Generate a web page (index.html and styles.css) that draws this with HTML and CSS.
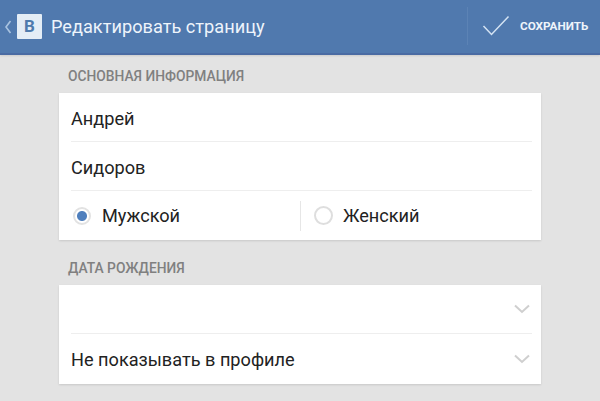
FILE: index.html
```html
<!DOCTYPE html>
<html lang="ru">
<head>
<meta charset="utf-8">
<title>Редактировать страницу</title>
<link rel="stylesheet" href="styles.css">
</head>
<body>
<header class="topbar">
  <div class="brand">
    <svg class="back" width="8" height="16" viewBox="0 0 8 16"><path d="M6.5 2 L2 8 L6.5 14" fill="none" stroke="#a9c3e0" stroke-width="1.6"/></svg>
    <span class="logo">В</span>
    <span class="title">Редактировать страницу</span>
  </div>
  <div class="save">
    <svg class="check" width="28" height="22" viewBox="0 0 28 22"><path d="M1.5 11 L9.5 19.5 L26.5 1.5" fill="none" stroke="#d4e3f3" stroke-width="1.5"/></svg>
    <span class="save-label">СОХРАНИТЬ</span>
  </div>
</header>
<main class="content">
  <h2 class="section-title">ОСНОВНАЯ ИНФОРМАЦИЯ</h2>
  <section class="card">
    <div class="row">Андрей</div>
    <div class="row">Сидоров</div>
    <div class="row gender">
      <div class="option">
        <span class="radio on"></span>
        <span>Мужской</span>
      </div>
      <div class="option second">
        <span class="radio"></span>
        <span>Женский</span>
      </div>
    </div>
  </section>
  <h2 class="section-title lower">ДАТА РОЖДЕНИЯ</h2>
  <section class="card">
    <div class="row select">
      <span></span>
      <svg class="chev" width="16" height="10" viewBox="0 0 16 10"><path d="M1 1.5 L8 8 L15 1.5" fill="none" stroke="#cfcfcf" stroke-width="2"/></svg>
    </div>
    <div class="row select">
      <span>Не показывать в профиле</span>
      <svg class="chev" width="16" height="10" viewBox="0 0 16 10"><path d="M1 1.5 L8 8 L15 1.5" fill="none" stroke="#cfcfcf" stroke-width="2"/></svg>
    </div>
  </section>
</main>
</body>
</html>
```
FILE: styles.css
```css
* { box-sizing: border-box; }
html, body { margin: 0; padding: 0; }
body {
  width: 600px;
  height: 401px;
  overflow: hidden;
  background: #e3e3e3;
  font-family: Roboto, "Liberation Sans", sans-serif;
  color: #222;
}
.topbar {
  height: 55px;
  background: #5079ae;
  border-bottom: 2px solid #4a6ba3;
  box-shadow: 0 1px 2px rgba(0,0,0,.1);
  display: flex;
  justify-content: space-between;
  align-items: center;
}
.brand { display: flex; align-items: center; padding-left: 4px; }
.back { display: block; }
.logo {
  width: 25px;
  height: 25px;
  margin-left: 5px;
  background: #e4edf6;
  color: #4f7bad;
  font-weight: 700;
  font-size: 17px;
  line-height: 25px;
  text-align: center;
  border-radius: 1px;
}
.title { margin-left: 9px; font-size: 18.2px; color: #eef4fb; }
.save {
  width: 133px;
  height: 38px;
  border-left: 1px solid #5c83b5;
  display: flex;
  align-items: center;
  padding-left: 14px;
  margin-top: -1px;
}
.save-label { margin-left: 10px; font-size: 11.7px; font-weight: 700; color: #eef4fb; }
.content { width: 482px; margin-left: 59px; }
.section-title {
  margin: 0;
  height: 38px;
  padding: 14px 0 0 9px;
  font-size: 13.8px;
  line-height: 15px;
  font-weight: 500;
  color: #808080;
}
.section-title.lower { height: 45px; padding-top: 21px; }
.card {
  background: #fff;
  padding: 0 9px 0 12px;
  box-shadow: 0 1px 2px rgba(0,0,0,.12);
}
.row {
  height: 49px;
  display: flex;
  align-items: center;
  padding-top: 2px;
  font-size: 18.15px;
  border-bottom: 1px solid #eeeeee;
}
.row:last-child { border-bottom: 0; }
.gender { padding-top: 0; }
.option { display: flex; align-items: center; gap: 11px; width: 229px; }
.option.second { height: 30px; border-left: 1px solid #e6e6e6; padding-left: 13px; gap: 10px; }
.radio {
  width: 18px;
  height: 18px;
  margin-left: 2px;
  border: 2px solid #e2e2e2;
  border-radius: 50%;
  background: #fff;
  display: block;
  flex: none;
}
.option.second .radio { width: 19px; height: 19px; margin-left: 0; border-color: #dedede; }
.radio.on {
  background: radial-gradient(circle, #4f7fbd 0 4.5px, #fff 5.5px);
}
.select { justify-content: space-between; padding-right: 2px; padding-top: 0; }
.select:last-child { height: 50px; }
.chev { display: block; }
```
